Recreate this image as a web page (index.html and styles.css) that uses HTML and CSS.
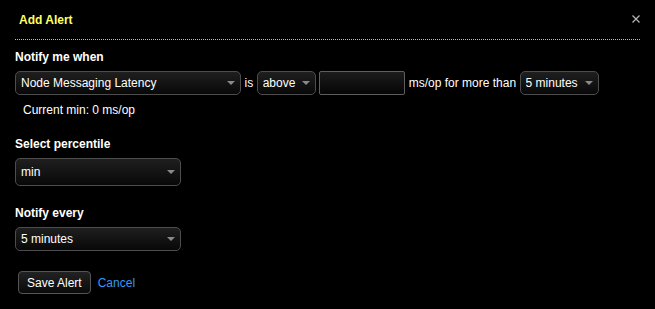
FILE: index.html
```html
<!DOCTYPE html>
<html lang="en">
<head>
	<meta charset="UTF-8">
	<title>Add Alert</title>
	<link rel="stylesheet" href="styles.css">
</head>
<body>
	<section class="modal">
		<header class="header">
			<h3 class="title">Add Alert</h3>
			<a href="javascript:;" class="close">
				<svg width="8" height="8" viewBox="0 0 8 8"><path d="M0.5 0.5L7.5 7.5M7.5 0.5L0.5 7.5" stroke="#b5b5b5" stroke-width="1.2"/></svg>
			</a>
		</header>
		<form action="" class="alertForm">
			<p class="label">Notify me when</p>
			<div class="row">
				<span class="sel sel-metric"><select><option>Node Messaging Latency</option></select></span>
				<span class="txt">is</span>
				<span class="sel sel-op"><select><option>above</option></select></span>
				<input type="text" class="numIpt">
				<span class="txt">ms/op for more than</span>
				<span class="sel sel-dur"><select><option>5 minutes</option></select></span>
			</div>
			<p class="current">Current min: 0 ms/op</p>

			<p class="label">Select percentile</p>
			<span class="sel sel-wide sel-tall"><select><option>min</option></select></span>

			<p class="label">Notify every</p>
			<span class="sel sel-wide"><select><option>5 minutes</option></select></span>

			<div class="actions">
				<input type="button" value="Save Alert" class="btnSave">
				<a href="javascript:;" class="cancel">Cancel</a>
			</div>
		</form>
	</section>
</body>
</html>
```

FILE: styles.css
```css
body{
	margin:0;
	background:#000;
	color:#fff;
	font-family:"Liberation Sans", Arial, sans-serif;
	font-size:12px;
}
p,h3{
	margin:0;
}
.modal{
	padding:0 15px;
}
.header{
	display:flex;
	justify-content:space-between;
	align-items:center;
	padding:13px 0 11px 4px;
	border-bottom:1px dotted #bbb;
}
.title{
	font-size:12px;
	line-height:15px;
	font-weight:bold;
	color:#ffff66;
}
.close{
	display:block;
	width:8px;
	height:8px;
	line-height:0;
	margin-top:-4px;
}
.alertForm{
	padding-top:10px;
}
.label{
	font-weight:bold;
	line-height:15px;
	margin-bottom:6px;
}
.row{
	display:flex;
	align-items:center;
	gap:3.5px;
}
.txt{
	line-height:15px;
}
.sel{
	position:relative;
	display:block;
	height:24px;
}
.sel:after{
	content:"";
	position:absolute;
	right:6px;
	top:50%;
	margin-top:-2px;
	border-left:4px solid transparent;
	border-right:4px solid transparent;
	border-top:4px solid #8a8a8a;
	pointer-events:none;
}
.sel select{
	-webkit-appearance:none;
	appearance:none;
	box-sizing:border-box;
	width:100%;
	height:100%;
	margin:0;
	padding:0 18px 0 5px;
	border:1px solid #4d4d4d;
	border-radius:5px;
	background:linear-gradient(#1f1f1f,#080808);
	color:#fff;
	font-family:inherit;
	font-size:12px;
	outline:none;
}
.sel-metric{
	width:226px;
}
.sel-op{
	width:59px;
}
.sel-dur{
	width:79px;
}
.sel-wide{
	width:166px;
	height:24px;
}
.sel-tall{
	height:28px;
}
.numIpt{
	box-sizing:border-box;
	width:86px;
	height:24px;
	margin:0;
	border:1px solid #5e5e5e;
	border-radius:2px;
	background:linear-gradient(#1c1c1c,#050505);
	color:#fff;
	outline:none;
}
.current{
	padding:8px 0 0 8px;
	line-height:15px;
	margin-bottom:19px;
}
.sel-tall{
	margin-bottom:20px;
}
.actions{
	display:flex;
	align-items:center;
	padding:20px 0 0 3px;
}
.btnSave{
	height:23px;
	padding:0 8px;
	margin:0;
	border:1px solid #555;
	border-radius:4px;
	background:linear-gradient(#222,#0a0a0a);
	color:#fff;
	font-family:inherit;
	font-size:12px;
	cursor:pointer;
}
.cancel{
	margin-left:7px;
	color:#3399ff;
	text-decoration:none;
}
```
